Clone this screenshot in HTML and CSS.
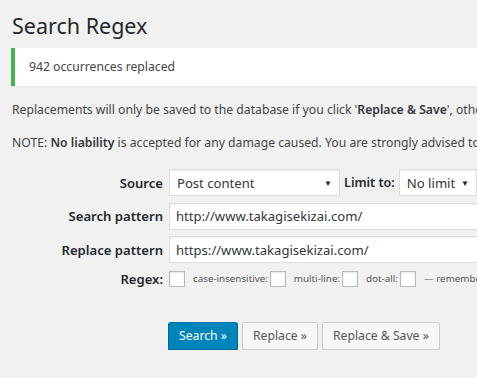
FILE: index.html
```html
<!DOCTYPE html>
<html>
<head>
    <title>Search Regex</title>
    <link rel="stylesheet" href="styles.css">
</head>
<body>
    <div class="wrap">
        <h1>Search Regex</h1>

        <div class="notice">942 occurrences replaced</div>

        <p>Replacements will only be saved to the database if you click '<strong>Replace &amp; Save</strong>', otherwise you will get a preview of the results.</p>
        <p>NOTE: <strong>No liability</strong> is accepted for any damage caused. You are strongly advised to backup your database before making any changes.</p>

        <form class="search-form">
            <label class="field-label">Source</label>
            <div class="field-row">
                <div class="select source-select">
                    <span>Post content</span>
                    <span class="arrow">&#9660;</span>
                </div>
                <span class="limit-label">Limit to:</span>
                <div class="select limit-select">
                    <span>No limit</span>
                    <span class="arrow">&#9660;</span>
                </div>
            </div>

            <label class="field-label">Search pattern</label>
            <div class="field-row">
                <input type="text" class="text-input" value="http://www.takagisekizai.com/">
            </div>

            <label class="field-label">Replace pattern</label>
            <div class="field-row">
                <input type="text" class="text-input" value="https://www.takagisekizai.com/">
            </div>

            <label class="field-label regex-label">Regex:</label>
            <div class="field-row options">
                <span class="checkbox"></span>
                <span class="opt">case-insensitive:</span>
                <span class="checkbox"></span>
                <span class="opt">multi-line:</span>
                <span class="checkbox"></span>
                <span class="opt">dot-all:</span>
                <span class="checkbox"></span>
                <span class="opt">&mdash; remember to surround your regex with a delimiter!</span>
            </div>
        </form>

        <div class="actions">
            <button type="button" class="button button-primary">Search &raquo;</button>
            <button type="button" class="button">Replace &raquo;</button>
            <button type="button" class="button">Replace &amp; Save &raquo;</button>
        </div>
    </div>
</body>
</html>
```

FILE: styles.css
```css
html, body {
    margin: 0;
    background-color: #f1f1f1;
    overflow: hidden;
}
body {
    font-family: "Noto Sans", "Open Sans", sans-serif;
    font-size: 12.2px;
    color: #444;
}
.wrap {
    width: 1000px;
    padding-left: 11px;
}
h1 {
    font-size: 21.5px;
    font-weight: 400;
    color: #23282d;
    line-height: 29px;
    margin: 0;
    padding: 11px 0 8px 1px;
}
.notice {
    background-color: #fff;
    border-left: 4px solid #46b450;
    box-shadow: 0 1px 1px rgba(0,0,0,0.04);
    padding: 0 14px;
    height: 38px;
    line-height: 38px;
    margin-bottom: 15px;
}
p {
    margin: 0 0 15px 1px;
    line-height: 18px;
    white-space: nowrap;
}
strong {
    font-weight: 600;
    color: #32373c;
}
.search-form {
    display: grid;
    grid-template-columns: 152px 1fr;
    column-gap: 6px;
    row-gap: 6.5px;
    margin-top: 17px;
    align-items: center;
}
.field-label {
    text-align: right;
    font-weight: 600;
    font-size: 13.1px;
    color: #23282d;
}
.field-row {
    display: flex;
    align-items: center;
}
.select {
    height: 27px;
    box-sizing: border-box;
    background-color: #fff;
    border: 1px solid #ddd;
    box-shadow: inset 0 1px 2px rgba(0,0,0,0.07);
    display: flex;
    align-items: center;
    justify-content: space-between;
    padding: 0 7px;
    font-size: 13.1px;
    color: #32373c;
}
.arrow {
    font-size: 8px;
    color: #222;
}
.source-select {
    width: 171px;
}
.limit-select {
    width: 78px;
}
.limit-label {
    font-weight: 600;
    font-size: 12.6px;
    color: #23282d;
    margin: 0 4px 0 4px;
}
.text-input {
    width: 400px;
    height: 27px;
    box-sizing: border-box;
    border: 1px solid #ddd;
    box-shadow: inset 0 1px 2px rgba(0,0,0,0.07);
    padding: 0 6px;
    font-family: inherit;
    font-size: 13.1px;
    color: #32373c;
    margin: 0;
}
.options {
    height: 16px;
}
.checkbox {
    width: 16px;
    height: 16px;
    box-sizing: border-box;
    background-color: #fff;
    border: 1px solid #b4b9be;
    box-shadow: inset 0 1px 2px rgba(0,0,0,0.1);
}
.opt {
    font-size: 9.8px;
    color: #555;
    margin: 0 2px 0 8px;
    white-space: nowrap;
}
.actions {
    display: flex;
    gap: 4px;
    margin: 34px 0 0 157px;
}
.button {
    height: 28px;
    padding: 0 10px;
    font-family: inherit;
    font-size: 12.2px;
    color: #555;
    background-color: #f7f7f7;
    border: 1px solid #ccc;
    border-radius: 3px;
    box-shadow: 0 1px 0 #ccc;
    cursor: pointer;
    margin: 0;
}
.button-primary {
    background-color: #0085ba;
    border-color: #0073aa #006799 #006799;
    box-shadow: 0 1px 0 #006799;
    color: #fff;
}
```
